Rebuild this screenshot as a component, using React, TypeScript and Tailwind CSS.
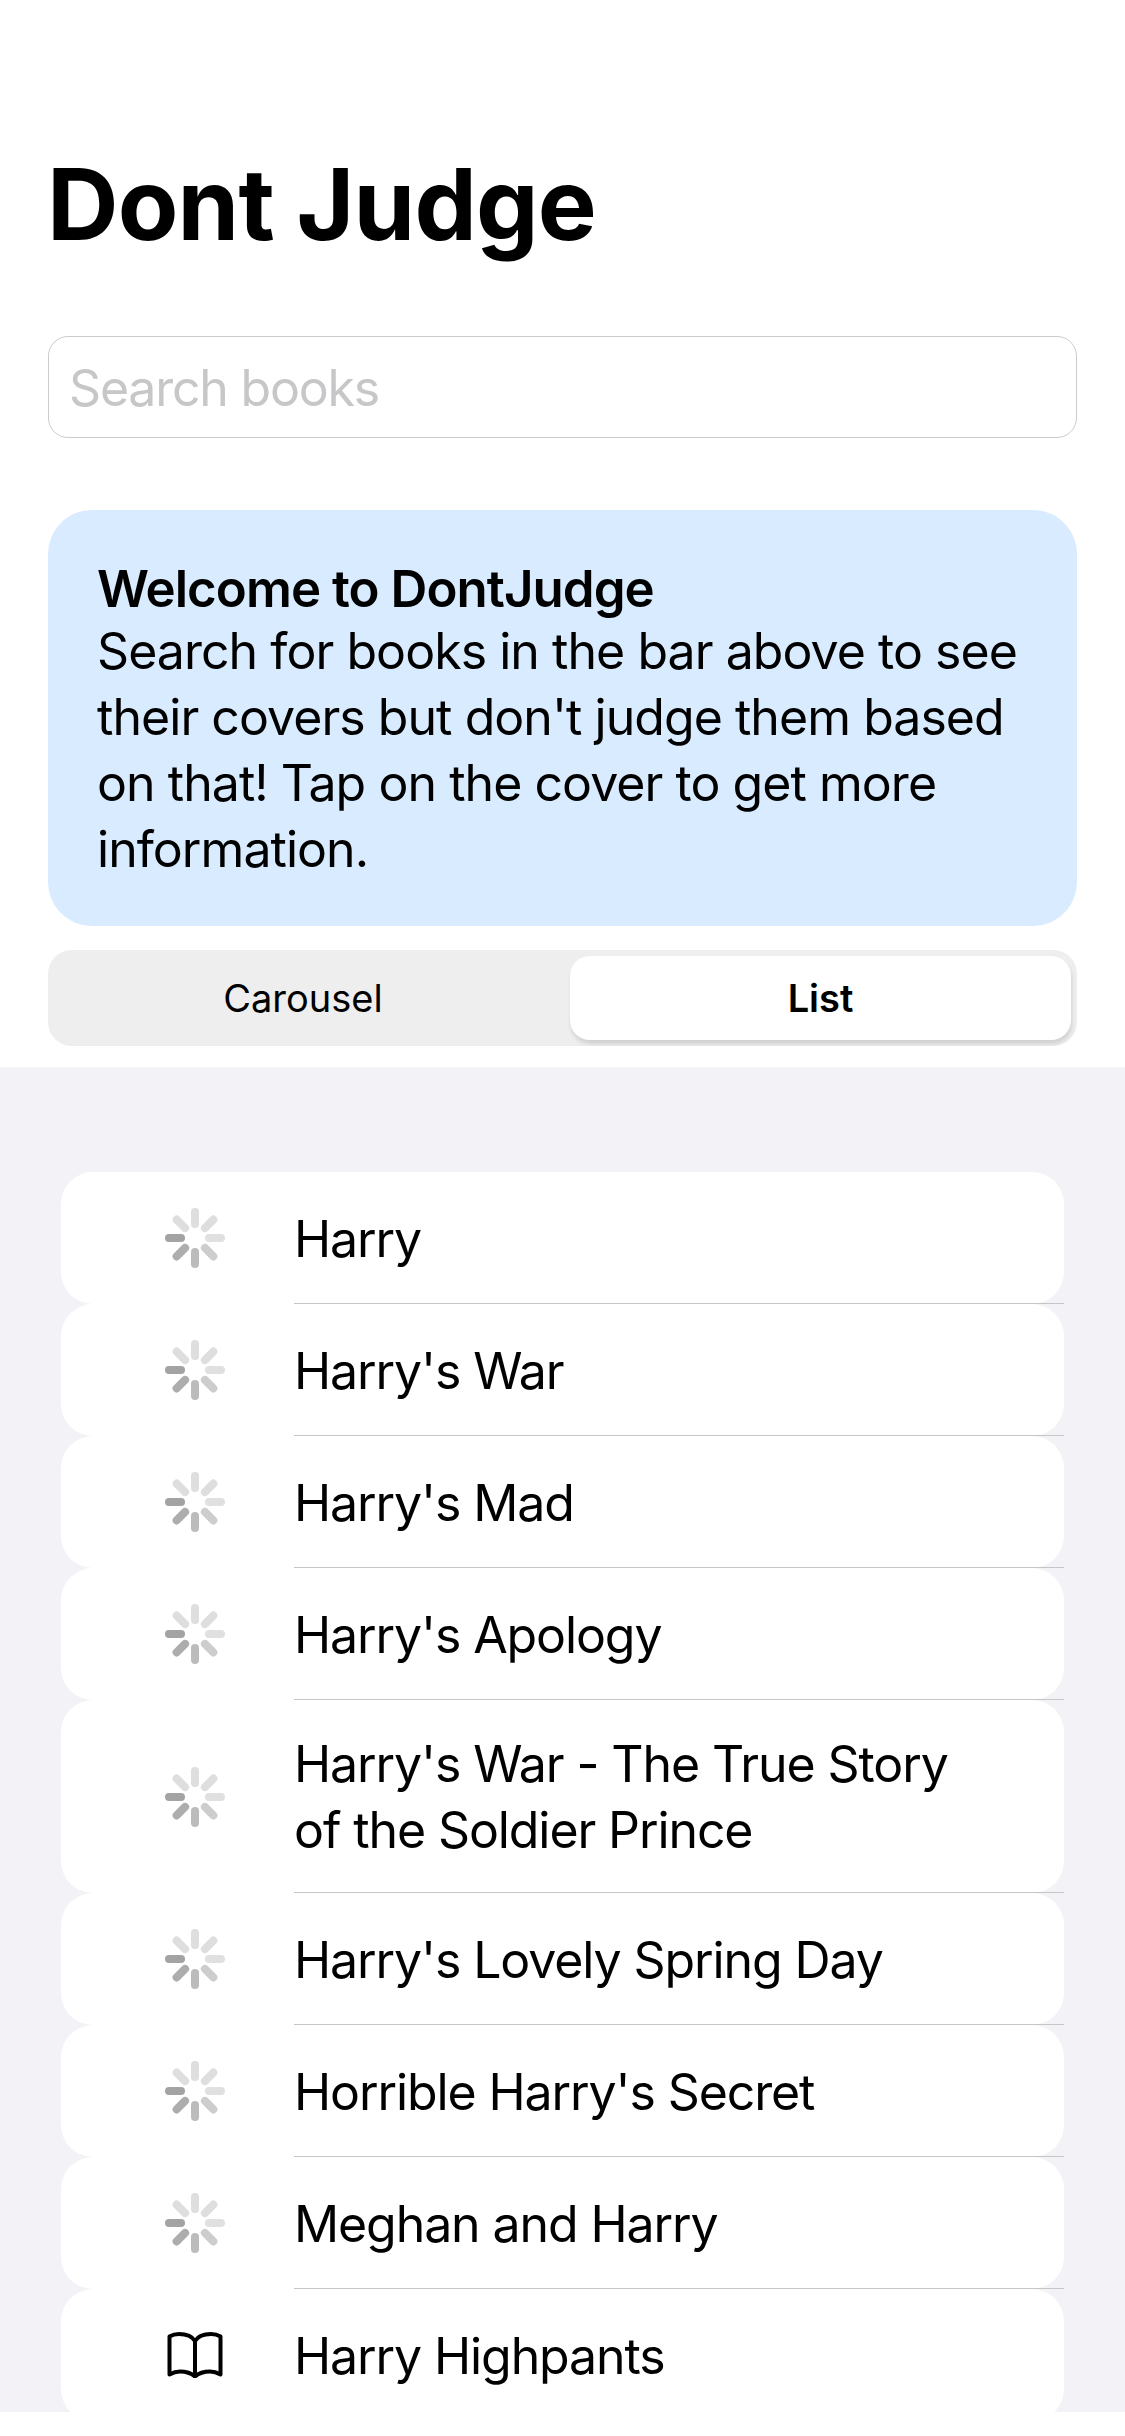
// App.tsx
const BOOKS = [
  { title: "Harry", loading: true },
  { title: "Harry's War", loading: true },
  { title: "Harry's Mad", loading: true },
  { title: "Harry's Apology", loading: true },
  { title: "Harry's War - The True Story of the Soldier Prince", loading: true },
  { title: "Harry's Lovely Spring Day", loading: true },
  { title: "Horrible Harry's Secret", loading: true },
  { title: "Meghan and Harry", loading: true },
  { title: "Harry Highpants", loading: false },
];

// angle (deg, 0 = up) and colour of each spinner spoke
const SPOKES = [
  [0, "#dedede"],
  [45, "#dedede"],
  [90, "#e0e0e0"],
  [135, "#cdcdcd"],
  [180, "#bcbcbc"],
  [225, "#adadad"],
  [270, "#a3a3a3"],
  [315, "#dedede"],
] as const;

function Spinner() {
  return (
    <svg width="60" height="60" viewBox="0 0 60 60" fill="none">
      {SPOKES.map(([angle, color]) => (
        <line
          key={angle}
          x1="30"
          y1="4"
          x2="30"
          y2="16"
          stroke={color}
          strokeWidth="8"
          strokeLinecap="round"
          transform={`rotate(${angle} 30 30)`}
        />
      ))}
    </svg>
  );
}

function BookIcon() {
  return (
    <svg width="56" height="46" viewBox="0 0 56 46" fill="none" stroke="#000" strokeWidth="4" strokeLinejoin="round" strokeLinecap="round">
      <path d="M28 9C25 4 19 2 12 2C8 2 5 3 2.5 4.5V42.5C6 40.5 9 39.5 13 39.5C19 39.5 24 41 28 44.5C32 41 37 39.5 43 39.5C47 39.5 50 40.5 53.5 42.5V4.5C51 3 48 2 44 2C37 2 31 4 28 9Z" />
      <path d="M28 9V44" />
    </svg>
  );
}

export default function App() {
  return (
    <div className="w-[1125px] bg-white font-['Inter',sans-serif] text-black">
      <div className="px-12 h-[1067px] overflow-hidden">
        <h1 className="pt-[150px] -ml-[1px] text-[99px] leading-[108px] font-bold tracking-[-0.8px] h-[336px]">Dont Judge</h1>

        <div className="h-[102px] border border-[#cbcbcd] rounded-[20px] flex items-center px-5 pt-[2px]">
          <span className="text-[50px] tracking-[-1.2px] text-[#c7c7c9]">Search books</span>
        </div>

        <div className="mt-[72px] h-[416px] rounded-[44px] bg-[#d9ebff] pl-[49px] pr-[40px] pt-[49px]">
          <div className="text-[51px] leading-[59px] font-semibold tracking-[-0.95px]">Welcome to DontJudge</div>
          <p className="text-[50px] leading-[66px] tracking-[-0.95px]">
            Search for books in the bar above to see their covers but don't judge them based on that! Tap on the cover to get more information.
          </p>
        </div>

        <div className="mt-6 h-[96px] rounded-[24px] bg-[#eeeeee] p-[6px] flex overflow-hidden">
          <div className="w-[498px] mr-[18px] flex items-center justify-center text-[38px]">Carousel</div>
          <div className="flex-1 flex items-center justify-center bg-white rounded-[20px] text-[38px] font-semibold shadow-[1px_4px_4px_rgba(0,0,0,0.12)]">List</div>
        </div>
      </div>

      <div className="h-[1345px] overflow-hidden bg-[#f2f2f7] px-[61px] pt-[105px]">
        {BOOKS.map((book) => (
          <div key={book.title} className="flex bg-white rounded-[32px]">
            <div className="w-[60px] ml-[104px] mr-[69px] shrink-0 flex items-center justify-center">
              {book.loading ? <Spinner /> : <BookIcon />}
            </div>
            <div className="flex-1 min-h-[132px] border-b border-[#c6c6c8] flex items-center pr-[80px] pt-[31px] pb-[29px] text-[50px] leading-[66px] tracking-[-1.1px]">
              {book.title}
            </div>
          </div>
        ))}
      </div>

      <div className="h-6 bg-white" />
    </div>
  );
}
